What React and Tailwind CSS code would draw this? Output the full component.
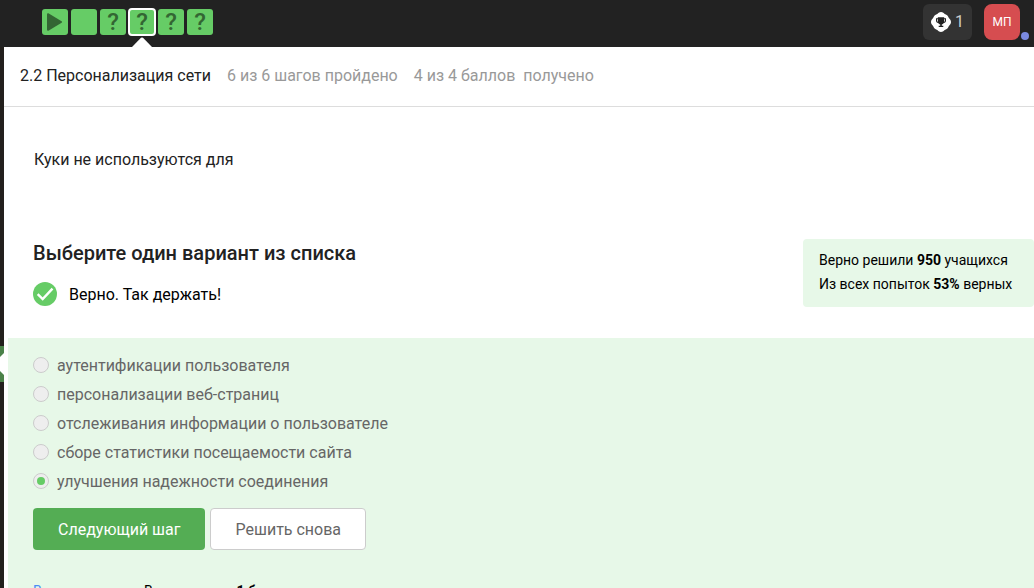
import React, { useState } from "react";

const steps = [
  { kind: "video", label: "Шаг 1" },
  { kind: "text", label: "Шаг 2" },
  { kind: "quiz", label: "Шаг 3" },
  { kind: "quiz", label: "Шаг 4", current: true },
  { kind: "quiz", label: "Шаг 5" },
  { kind: "quiz", label: "Шаг 6" },
];

const options = [
  "аутентификации пользователя",
  "персонализации веб-страниц",
  "отслеживания информации о пользователе",
  "сборе статистики посещаемости сайта",
  "улучшения надежности соединения",
];

function Step({ step }) {
  return (
    <li className="relative">
      <a
        href="#"
        aria-label={step.label}
        aria-current={step.current ? "step" : undefined}
        className={
          step.current
            ? "flex size-[26px] items-center justify-center rounded-[3px] bg-[#66cc66] text-[#336633] outline-2 -outline-offset-1 outline-white"
            : "flex size-[26px] items-center justify-center rounded-[3px] bg-[#66cc66] text-[#336633]"
        }
      >
        {step.kind === "video" && (
          <svg viewBox="0 0 26 26" className="size-[26px]" fill="currentColor" aria-hidden="true">
            <path d="M5 5.2c0-.9.7-1.3 1.4-.9L19.6 12.300c.6.4.6 1 0 1.400L6.400 21.700c-.7.4-1.400 0-1.400-.9z" />
          </svg>
        )}
        {step.kind === "quiz" && <span className="text-2xl leading-[26px] font-medium">?</span>}
      </a>
      {step.current && (
        <svg viewBox="0 0 20 10" className="absolute top-[28px] left-[3px] h-[10px] w-5 fill-white" aria-hidden="true">
          <path d="M0 10 9 .8q1-.8 2 0L20 10z" />
        </svg>
      )}
    </li>
  );
}

function TopBar() {
  return (
    <header className="flex h-[47px] shrink-0 items-start justify-between bg-[#222222] pr-[14px] pl-[42px]">
      <nav aria-label="Шаги урока" className="pt-[9px]">
        <ol className="flex gap-[3px]">
          {steps.map((step) => (
            <Step key={step.label} step={step} />
          ))}
        </ol>
      </nav>
      <div className="flex gap-3 pt-1">
        <button type="button" className="flex h-9 items-center gap-1 rounded-md bg-[#333333] px-2 text-[#cccccc]">
          <svg viewBox="0 0 20 20" className="size-5" aria-hidden="true">
            <path
              fill="#fff"
              d="M10 0c1.500 0 2.400.8 3.400 1.700 1 .8 2.100.9 3 1.900s1 2 1.900 3S20 8.500 20 10s-.8 2.400-1.700 3.400c-.9 1-.9 2-1.900 3s-2 1-3 1.900S11.500 20 10 20s-2.400-.8-3.400-1.700c-1-.9-2-.9-3-1.900s-1-2-1.900-3S0 11.500 0 10s.8-2.400 1.700-3.400 1-2 1.900-3 2-1.100 3-1.900S8.500 0 10 0z"
            />
            <path
              fill="#222"
              d="M6.800 5.200h6.400v1H15v2.200c0 1.400-.8 2.300-2.200 2.500-.4.9-1.100 1.500-2 1.700v1.200h1.500v1.200H7.700v-1.200h1.500v-1.200c-.9-.2-1.600-.8-2-1.700C5.800 10.700 5 9.800 5 8.400V6.200h1.800zM6 7.200v1.200c0 .8.300 1.200.9 1.400-.1-.4-.1-.8-.1-1.200V7.200zm7.200 0v1.400c0 .4 0 .8-.1 1.200.6-.2.9-.6.9-1.400V7.200z"
            />
          </svg>
          <span className="w-[9px] text-base">1</span>
        </button>
        <button
          type="button"
          aria-label="Профиль"
          className="relative flex size-9 items-center justify-center rounded-lg bg-[#d64d50] text-xs text-white"
        >
          МП
          <span className="absolute -right-[9px] bottom-0 size-2 rounded-full bg-[#7b8ae0]" />
        </button>
      </div>
    </header>
  );
}

export default function App() {
  const [answer, setAnswer] = useState(options[4]);

  return (
    <div className="flex h-screen flex-col overflow-hidden bg-white font-['Roboto',sans-serif] text-base text-[#222222]">
      <TopBar />
      <div className="flex min-h-0 flex-1">
        <aside className="w-1 shrink-0 bg-[#23201d] pt-[299px]">
          <svg viewBox="0 0 4 36" className="h-9 w-1" aria-hidden="true">
            <path fill="#4b8249" d="M0 0h4v36H0z" />
            <path fill="#fff" d="M4 7v22L0 25V11z" />
          </svg>
        </aside>
        <main className="flex min-w-0 flex-1 flex-col">
          <div className="flex h-[60px] shrink-0 items-center gap-4 border-b border-[#dddddd] px-4 pb-[2px] whitespace-nowrap">
            <h1>2.2 Персонализация сети</h1>
            <span className="text-[#999999]">6 из 6 шагов пройдено</span>
            <span className="whitespace-pre text-[#999999]">4 из 4 баллов{"  "}получено</span>
          </div>

          <p className="px-[30px] pt-[41px] leading-6">Куки не используются для</p>

          <section className="mt-[67px] flex items-start justify-between pl-[29px]">
            <div>
              <h2 id="question" className="text-xl leading-7 font-medium">
                Выберите один вариант из списка
              </h2>
              <div className="mt-[15px] flex items-start gap-3 text-black">
                <svg viewBox="0 0 24 24" className="size-6" aria-hidden="true">
                  <circle cx="12" cy="12" r="12" fill="#66cc66" />
                  <path d="m4.700 12.200 5 4.800 9.800-10.300" fill="none" stroke="#fff" strokeWidth="2.400" />
                </svg>
                <p className="leading-[26px]">Верно. Так держать!</p>
              </div>
            </div>
            <div className="min-w-[231px] rounded bg-[#e7f8e8] px-4 pt-[9px] pb-[11px] text-sm leading-6 whitespace-nowrap text-black">
              <p>
                Верно решили <b>950</b> учащихся
              </p>
              <p>
                Из всех попыток <b>53%</b> верных
              </p>
            </div>
          </section>

          <form
            className="mt-[30px] ml-1 flex-1 bg-[#e7f8e8] px-[25px] pt-4"
            onSubmit={(event) => event.preventDefault()}
          >
            <div role="radiogroup" aria-labelledby="question" className="flex flex-col gap-[5px] text-[#666666]">
              {options.map((option) => (
                <label key={option} className="flex items-center gap-2 leading-6">
                  <input
                    type="radio"
                    name="answer"
                    value={option}
                    checked={answer === option}
                    onChange={() => setAnswer(option)}
                    className="mb-[2px] grid size-4 appearance-none place-items-center rounded-full border border-[#cccccc] bg-[#eeeeee] before:size-2 before:rounded-full checked:before:bg-[#66cc66]"
                  />
                  {option}
                </label>
              ))}
            </div>
            <div className="mt-[14px] flex gap-[5px]">
              <button type="submit" className="h-[42px] rounded bg-[#54ad54] px-[25px] pt-[2px] text-white">
                Следующий шаг
              </button>
              <button
                type="button"
                className="h-[42px] rounded border border-[#cccccc] bg-white px-6 pt-[2px] text-[#666666]"
              >
                Решить снова
              </button>
            </div>
            <div className="mt-[29px] flex gap-[14px] text-sm leading-6 whitespace-nowrap">
              <a href="#" className="text-[#4c8df5]">
                Ваши решения
              </a>
              <span className="text-black">
                Вы получили: <b>1 балл</b>
              </span>
            </div>
          </form>
        </main>
      </div>
    </div>
  );
}
